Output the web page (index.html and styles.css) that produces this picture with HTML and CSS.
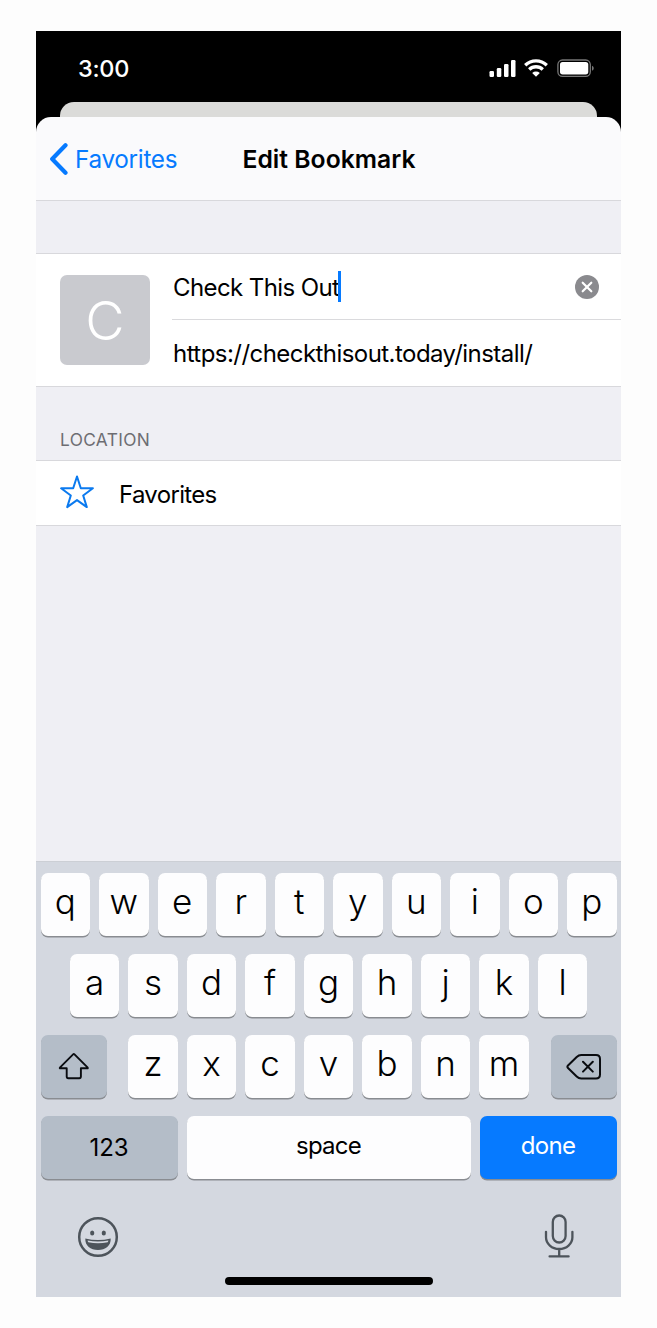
FILE: index.html
```html
<!DOCTYPE html>
<html lang="en">
<head>
<meta charset="utf-8">
<title>Edit Bookmark</title>
<link rel="stylesheet" href="styles.css">
</head>
<body>
<main class="phone">
  <header class="top">
    <div class="status">
      <span class="time">3:00</span>
      <svg class="status-icons" width="106" height="20" viewBox="0 0 106 20" fill="#fff">
        <rect x="1.5" y="12" width="4.5" height="6" rx="1.2"/>
        <rect x="8.8" y="9" width="4.5" height="9" rx="1.2"/>
        <rect x="16" y="5" width="4.5" height="13" rx="1.2"/>
        <rect x="23" y="1" width="4.5" height="17" rx="1.2"/>
        <g fill="none" stroke="#fff" stroke-width="3.3">
          <path d="M37.2 6.2a15.6 15.6 0 0 1 21.6 0"/>
          <path d="M41.2 10.5a9.8 9.8 0 0 1 13.6 0"/>
        </g>
        <path d="M44.2 14a5.6 5.6 0 0 1 7.6 0L48 17.8z"/>
        <rect x="69.9" y="1" width="32.4" height="16.4" rx="4.6" fill="none" stroke="#777" stroke-width="1.3"/>
        <rect x="72" y="3" width="28.3" height="12.4" rx="2.6"/>
        <path d="M104 6.8c2.3.8 2.3 4.2 0 5z" fill="#777"/>
      </svg>
    </div>
    <div class="back-sheet"></div>
    <nav class="nav">
      <a class="back">
        <svg width="20" height="32" viewBox="0 0 20 32"><path d="M16.5 2.3 3.2 16l13.300 13.700" fill="none" stroke="#067aff" stroke-width="4.200" stroke-linecap="round" stroke-linejoin="round"/></svg>
        <span class="back-label">Favorites</span>
      </a>
      <h1 class="title">Edit Bookmark</h1>
    </nav>
  </header>

  <section class="bookmark">
    <div class="thumb">C</div>
    <div class="fields">
      <div class="field field-name">
        <span class="name">Check This Out</span><span class="caret"></span>
        <svg class="clear" width="24" height="24" viewBox="0 0 24 24"><circle cx="12" cy="12" r="12" fill="#8a8a8e"/><path d="m7.700 7.700 8.600 8.600m0-8.600-8.600 8.600" stroke="#fff" stroke-width="2.200" stroke-linecap="round"/></svg>
      </div>
      <div class="field field-url"><span class="url">https://checkthisout.today/install/</span></div>
    </div>
  </section>

  <h2 class="section-label"><span>LOCATION</span></h2>
  <section class="location">
    <svg width="34" height="34" viewBox="0 0 34 34"><path d="m17 1.500 3.800 11.700 12.100.1-9.700 7.200 3.600 11.600-9.800-7-9.800 7 3.600-11.600-9.700-7.200 12.100-.1z" fill="none" stroke="#0b7aef" stroke-width="2" stroke-linejoin="round"/></svg>
    <span class="folder">Favorites</span>
  </section>

  <section class="keyboard">
    <div class="row">
      <b class="key">q</b><b class="key">w</b><b class="key">e</b><b class="key">r</b><b class="key">t</b><b class="key">y</b><b class="key">u</b><b class="key">i</b><b class="key">o</b><b class="key">p</b>
    </div>
    <div class="row row-center">
      <b class="key">a</b><b class="key">s</b><b class="key">d</b><b class="key">f</b><b class="key">g</b><b class="key">h</b><b class="key">j</b><b class="key">k</b><b class="key">l</b>
    </div>
    <div class="row row-spread">
      <b class="key key-side">
        <svg width="32" height="30" viewBox="0 0 32 30"><path d="M15.100 2.400 2.100 15.300q-.9 1 .4 1h6.200v8.300q0 1.600 1.600 1.600h11q1.600 0 1.600-1.600v-8.300h6.200q1.300 0 .4-1L16.500 2.400q-.7-.7-1.400 0z" fill="none" stroke="#0a0c10" stroke-width="1.900" stroke-linejoin="round"/></svg>
      </b>
      <div class="letters">
        <b class="key">z</b><b class="key">x</b><b class="key">c</b><b class="key">v</b><b class="key">b</b><b class="key">n</b><b class="key">m</b>
      </div>
      <b class="key key-side key-delete">
        <svg width="36" height="28" viewBox="0 0 36 28"><path d="M2 12.500 10.700 4q2-2 4.500-2h14.800q4 0 4 4v15.500q0 4-4 4H15.200q-2.500 0-4.500-2L2 15q-1.200-1.200 0-2.500zM17 8.800l9.800 9.800m0-9.800L17 18.600" fill="none" stroke="#0a0c10" stroke-width="2" stroke-linejoin="round" stroke-linecap="round"/></svg>
      </b>
    </div>
    <div class="row">
      <b class="key key-wide key-num"><span>123</span></b>
      <b class="key key-space"><span>space</span></b>
      <b class="key key-wide key-done"><span>done</span></b>
    </div>
    <div class="tools">
      <svg width="42" height="42" viewBox="0 0 42 42"><circle cx="21" cy="21" r="18.800" fill="none" stroke="#4d545b" stroke-width="2.500"/><ellipse cx="15.200" cy="17" rx="2.100" ry="2.500" fill="#4d545b"/><ellipse cx="26.800" cy="17" rx="2.100" ry="2.500" fill="#4d545b"/><path d="M8.300 22.500q12.700 3 25.400 0C34 29.800 28.500 34 21 34S8 29.800 8.300 22.500z" fill="#4d545b"/><path d="M10.600 24.500q10.400 2.100 20.800 0-.2 1-.7 1.700-9.700 2.200-19.400 0-.5-.7-.7-1.700z" fill="#d4d8e0"/></svg>
      <svg class="mic" width="30" height="44" viewBox="0 0 30 44"><g fill="none" stroke="#4d545b" stroke-width="2.300" stroke-linecap="round"><rect x="8.800" y="1.500" width="12.800" height="27" rx="6.400"/><path d="M2 17.800v5.400a13.200 11.800 0 0 0 26.400 0v-5.400M15.200 35v7.400M5.600 42.400h19"/></g></svg>
    </div>
    <div class="home-bar"></div>
  </section>
</main>
</body>
</html>
```
FILE: styles.css
```css
* { box-sizing: border-box; }
body {
  margin: 0;
  padding: 31px 36px;
  height: 1328px;
  background: #fdfdfd;
  font-family: Inter, "Liberation Sans", sans-serif;
  font-size: 24px;
  color: #000;
}
span { white-space: nowrap; }
svg { display: block; flex: none; }
.phone {
  width: 585px;
  height: 1266px;
  display: flex;
  flex-direction: column;
  background: #efeff4;
}
.top { height: 170px; flex: none; background: linear-gradient(#000 110px, #fafafc 110px); border-bottom: 1px solid #d8d8dc; }
.status {
  height: 71px;
  padding: 5px 27px 0 42px;
  display: flex;
  align-items: center;
  justify-content: space-between;
  color: #fff;
}
.time { font-size: 23.5px; font-weight: 500; letter-spacing: -.3px; padding-bottom: 2px; }
.back-sheet { height: 15px; margin: 0 24px; background: #dbdbd9; border-radius: 14px 14px 0 0; }
.nav {
  height: 83px;
  display: grid;
  grid-template-columns: 1fr auto 1fr;
  align-items: center;
  padding: 0 12px 0 13px;
  background: #fafafc;
  border-radius: 15px 15px 0 0;
}
.back { display: flex; align-items: center; gap: 6px; color: #067aff; }
.back-label { font-size: 24.3px; letter-spacing: -.3px; }
.title { margin: 0; font-size: 24.7px; font-weight: 600; letter-spacing: .03px; white-space: nowrap; }
.bookmark {
  height: 134px;
  flex: none;
  margin-top: 52px;
  display: flex;
  padding-left: 24px;
  background: #fff;
  border: solid #d8d8dc;
  border-width: 1px 0;
}
.thumb {
  width: 90px;
  height: 90px;
  margin: 21px 22px 0 0;
  display: grid;
  place-items: center;
  background: #c9cacf;
  border-radius: 7px;
  color: #fff;
  font-size: 54px;
  font-weight: 300;
  padding-top: 1px;
}
.fields { flex: 1; }
.field { height: 66px; padding: 0 22px 0 1px; display: flex; align-items: center; letter-spacing: -.55px; }
.field-name { border-bottom: 1px solid #dadadd; }
.name { padding-top: 1px; letter-spacing: -.6px; }
.caret { width: 3px; height: 31px; background: #067aff; margin-left: -1px; }
.clear { margin-left: auto; }
.section-label {
  height: 73px;
  flex: none;
  margin: 0;
  padding: 42px 24px 0;
  font-size: 17.3px;
  line-height: 22px;
  font-weight: 400;
  letter-spacing: .35px;
  color: #6d6d72;
}
.location {
  height: 66px;
  flex: none;
  padding: 0 24px 2px;
  display: flex;
  align-items: center;
  gap: 25px;
  background: #fff;
  border: solid #d8d8dc;
  border-width: 1px 0;
}
.folder { letter-spacing: -.68px; padding-top: 4px; }
.keyboard {
  height: 436px;
  flex: none;
  margin-top: auto;
  padding: 11px 4.5px 0;
  background: #d4d8e0;
  border-top: 1px solid #cccfd5;
}
.row { height: 63px; display: flex; gap: 9px; margin-bottom: 18px; }
.row-center { justify-content: center; }
.row-spread { justify-content: space-between; }
.letters { display: flex; gap: 9px; }
.key {
  width: 49.5px;
  height: 63px;
  display: flex;
  align-items: center;
  justify-content: center;
  padding-bottom: 8px;
  background: #fdfdfe;
  border-radius: 7px;
  box-shadow: 0 1.5px 0 #898c91;
  font-size: 35px;
  font-weight: 350;
}
.key-side { width: 66px; padding: 0; background: #b4bdc8; }
.key-wide, .key-space { font-size: 24px; font-weight: 400; padding-bottom: 5px; letter-spacing: -.75px; }
.key-wide { width: 137px; }
.key-num { background: #b4bdc8; padding: 0; letter-spacing: -.1px; }
.key-space { flex: 1; }
.key-done { background: #067aff; color: #fff; }
.tools { display: flex; justify-content: space-between; align-items: center; padding: 6px 43px 0 36.5px; height: 74px; margin-top: 3px; }
.mic { margin-bottom: 3px; }
.home-bar { width: 208px; height: 8px; margin: 6px auto 0; border-radius: 4px; background: #000; }
```
